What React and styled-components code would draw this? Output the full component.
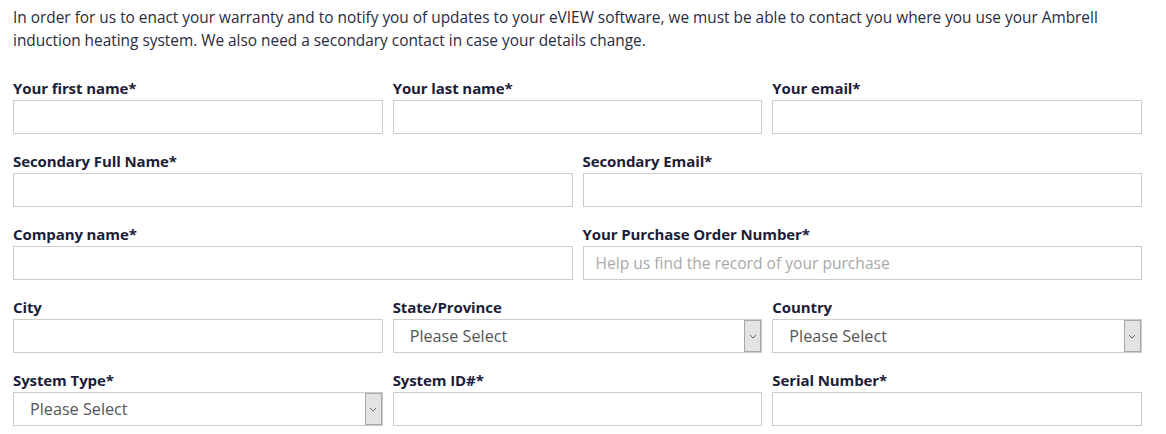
import React from "react";
import styled, { createGlobalStyle } from "styled-components";

const Global = createGlobalStyle`
  html, body { margin: 0; padding: 0; background: #fff; }
  body { font-family: "Open Sans", "Noto Sans", sans-serif; }
`;

const Page = styled.div`
  padding: 6px 24px 0 13px;
  width: 1129px;
`;

const Intro = styled.p`
  margin: 0;
  font-size: 15.4px;
  line-height: 23px;
  color: #2a2b3d;
  white-space: nowrap;
`;

const Form = styled.form`
  margin-top: 26px;
  display: flex;
  flex-direction: column;
  gap: 17px;
`;

const Row = styled.div`
  display: grid;
  grid-template-columns: repeat(${(p) => p.cols}, 1fr);
  column-gap: 10px;
`;

const Field = styled.div`
  display: flex;
  flex-direction: column;
  min-width: 0;
`;

const Label = styled.label`
  font-size: 15px;
  font-weight: 700;
  line-height: 20px;
  color: #1c1d3a;
  margin-bottom: 2px;
  letter-spacing: -0.1px;
`;

const Input = styled.input`
  box-sizing: border-box;
  height: 34px;
  width: 100%;
  border: 1px solid #cccccc;
  background: #fff;
  font-family: inherit;
  font-size: 15.6px;
  padding: 0 12px;
  color: #444;
  outline: none;
  &::placeholder { color: #a9a9a9; }
`;

const SelectBox = styled.div`
  position: relative;
  box-sizing: border-box;
  height: 34px;
  border: 1px solid #cccccc;
  background: #fff;
  display: flex;
  align-items: center;
  padding-left: 16px;
  font-size: 16.2px;
  color: #555;
`;

const Arrow = styled.span`
  position: absolute;
  top: 0;
  right: 0;
  bottom: 0;
  width: 15px;
  background: #e3e3e3;
  border: 1px solid #a8a8a8;
  display: flex;
  align-items: center;
  justify-content: center;
`;

const Select = () => (
  <SelectBox>
    Please Select
    <Arrow>
      <svg width="8" height="5" viewBox="0 0 8 5">
        <path d="M1 1 L4 4 L7 1" fill="none" stroke="#666" strokeWidth="1" />
      </svg>
    </Arrow>
  </SelectBox>
);

const F = ({ label, select, placeholder }) => (
  <Field>
    <Label>{label}</Label>
    {select ? <Select /> : <Input placeholder={placeholder} />}
  </Field>
);

export default function App() {
  return (
    <Page>
      <Global />
      <Intro>
        In order for us to enact your warranty and to notify you of updates to your eVIEW software, we must be able to contact you where you use your Ambrell
        <br />
        induction heating system. We also need a secondary contact in case your details change.
      </Intro>
      <Form>
        <Row cols={3}>
          <F label="Your first name*" />
          <F label="Your last name*" />
          <F label="Your email*" />
        </Row>
        <Row cols={2}>
          <F label="Secondary Full Name*" />
          <F label="Secondary Email*" />
        </Row>
        <Row cols={2}>
          <F label="Company name*" />
          <F label="Your Purchase Order Number*" placeholder="Help us find the record of your purchase" />
        </Row>
        <Row cols={3}>
          <F label="City" />
          <F label="State/Province" select />
          <F label="Country" select />
        </Row>
        <Row cols={3}>
          <F label="System Type*" select />
          <F label="System ID#*" />
          <F label="Serial Number*" />
        </Row>
      </Form>
    </Page>
  );
}
